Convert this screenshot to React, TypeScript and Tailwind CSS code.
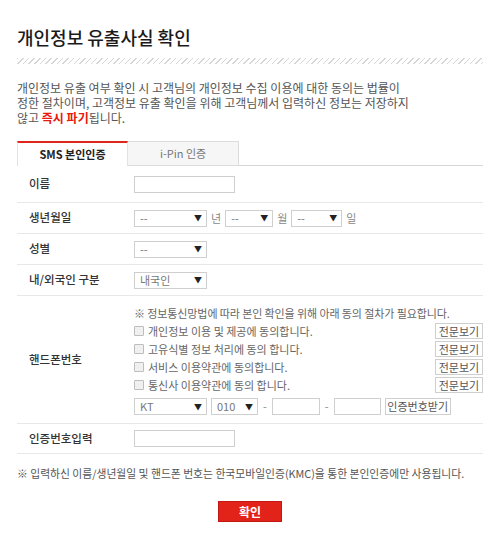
import React from 'react';

const Select = ({ value, w }: { value: string; w: string }) => (
  <div className={`${w} h-[17px] border border-[#cfcfcf] bg-white flex items-center justify-between pl-[5px] pr-[4px] text-[11px] text-[#777]`}>
    <span className="leading-none">{value}</span>
    <span className="text-[8px] text-[#222] leading-none">▼</span>
  </div>
);

const TextInput = ({ w }: { w: string }) => <div className={`${w} h-[17px] border border-[#cfcfcf] bg-white`} />;

const ViewButton = () => (
  <button className="w-[48px] h-[16px] border border-[#cfcfcf] bg-white text-[11px] leading-none text-[#555] flex items-center justify-center">
    전문보기
  </button>
);

const agreements = [
  '개인정보 이용 및 제공에 동의합니다.',
  '고유식별 정보 처리에 동의 합니다.',
  '서비스 이용약관에 동의합니다.',
  '통신사 이용약관에 동의 합니다.',
];

export default function App() {
  return (
    <div className="w-[500px] h-[548px] bg-white px-[17px] font-['Noto_Sans_CJK_KR','Noto_Sans',sans-serif] text-[#333]">
      <h1 className="pt-[25px] text-[18px] leading-[24px] font-medium text-[#1a1a1a]">개인정보 유출사실 확인</h1>
      <div className="mt-[9px] h-[6px] w-[466px] bg-[repeating-linear-gradient(135deg,#d6d6d6_0_1px,transparent_1px_4px)]" />

      <p className="mt-[16px] text-[12px] leading-[15px] text-[#555]">
        개인정보 유출 여부 확인 시 고객님의 개인정보 수집 이용에 대한 동의는 법률이
        <br />
        정한 절차이며, 고객정보 유출 확인을 위해 고객님께서 입력하신 정보는 저장하지
        <br />
        않고 <span className="text-[#e8190d] font-bold">즉시 파기</span>됩니다.
      </p>

      {/* tabs */}
      <div className="mt-[16px] flex h-[25px] w-[466px]">
        <div className="w-[111px] border-t-2 border-t-[#e0261b] border-x border-x-[#e2e2e2] bg-white flex items-center justify-center text-[11px] font-semibold text-[#222]">
          SMS 본인인증
        </div>
        <div className="w-[111px] border border-[#dcdcdc] border-l-0 bg-[#f6f6f6] flex items-center justify-center text-[11px] text-[#777]">
          i-Pin 인증
        </div>
        <div className="flex-1 border-b border-[#d6d6d6]" />
      </div>

      {/* form table */}
      <div className="w-[466px] text-[11.5px]">
        <div className="flex items-center h-[37px] border-b border-[#e8e8e8]">
          <div className="w-[117px] pl-[12px] font-medium">이름</div>
          <TextInput w="w-[101px]" />
        </div>
        <div className="flex items-center h-[31px] border-b border-[#e8e8e8]">
          <div className="w-[117px] pl-[12px] font-medium">생년월일</div>
          <Select value="--" w="w-[73px]" />
          <span className="mx-[4px] text-[11px] text-[#888]">년</span>
          <Select value="--" w="w-[48px]" />
          <span className="mx-[4px] text-[11px] text-[#888]">월</span>
          <Select value="--" w="w-[51px]" />
          <span className="ml-[4px] text-[11px] text-[#888]">일</span>
        </div>
        <div className="flex items-center h-[31px] border-b border-[#e8e8e8]">
          <div className="w-[117px] pl-[12px] font-medium">성별</div>
          <Select value="--" w="w-[73px]" />
        </div>
        <div className="flex items-center h-[31px] border-b border-[#e8e8e8]">
          <div className="w-[117px] pl-[12px] font-medium">내/외국인 구분</div>
          <Select value="내국인" w="w-[73px]" />
        </div>
        <div className="flex items-center h-[128px] border-b border-[#e8e8e8]">
          <div className="w-[117px] pl-[12px] font-medium">핸드폰번호</div>
          <div className="flex-1 text-[11px] text-[#666]">
            <div className="h-[18px] flex items-center tracking-[-0.1px]">※ 정보통신망법에 따라 본인 확인을 위해 아래 동의 절차가 필요합니다.</div>
            {agreements.map((a) => (
              <div key={a} className="h-[18px] flex items-center justify-between">
                <div className="flex items-center gap-[4px]">
                  <span className="w-[10px] h-[10px] border border-[#bdbdbd] bg-[#f0f0f0] rounded-[1px]" />
                  <span>{a}</span>
                </div>
                <ViewButton />
              </div>
            ))}
            <div className="mt-[4px] h-[17px] flex items-center">
              <Select value="KT" w="w-[73px]" />
              <div className="ml-[4px]" />
              <Select value="010" w="w-[47px]" />
              <span className="mx-[5px] text-[#888]">-</span>
              <TextInput w="w-[48px]" />
              <span className="mx-[5px] text-[#888]">-</span>
              <TextInput w="w-[47px]" />
              <button className="ml-[4px] w-[66px] h-[17px] border border-[#cfcfcf] bg-white text-[11px] leading-none text-[#555] flex items-center justify-center">
                인증번호받기
              </button>
            </div>
          </div>
        </div>
        <div className="flex items-center h-[30px] border-b border-[#e8e8e8]">
          <div className="w-[117px] pl-[12px] font-medium">인증번호입력</div>
          <TextInput w="w-[101px]" />
        </div>
      </div>

      <p className="mt-[12px] text-[10.8px] leading-[15px] text-[#555]">
        ※ 입력하신 이름/생년월일 및 핸드폰 번호는 한국모바일인증(KMC)을 통한 본인인증에만 사용됩니다.
      </p>

      <div className="mt-[20px] flex justify-center">
        <button className="w-[64px] h-[21px] bg-[#e2231a] border border-[#c21a12] text-white text-[12px] font-bold leading-none flex items-center justify-center">
          확인
        </button>
      </div>
    </div>
  );
}
